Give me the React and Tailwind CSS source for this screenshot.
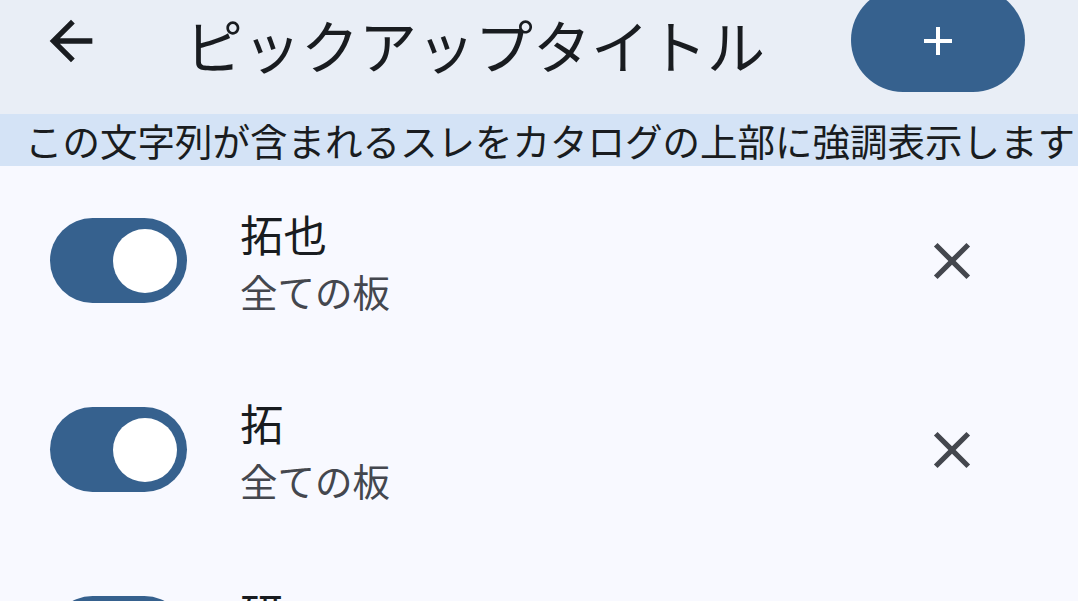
import React, { useState } from 'react';

const FONT = { fontFamily: '"Noto Sans CJK JP", "Noto Sans", sans-serif' };

const initialItems = [
  { id: 1, title: '拓也', board: '全ての板', enabled: true },
  { id: 2, title: '拓', board: '全ての板', enabled: true },
  { id: 3, title: '研', board: '全ての板', enabled: true },
];

const Toggle = ({ on, onChange }) => (
  <button
    onClick={onChange}
    className={`flex items-center w-[137px] h-[85px] rounded-full px-[10px] shrink-0 ${
      on ? 'bg-[#36618e] justify-end' : 'bg-[#dfe2eb] justify-start border-4 border-[#73777f]'
    }`}
  >
    <span className={`block rounded-full ${on ? 'w-[64px] h-[64px] bg-white' : 'w-[40px] h-[40px] bg-[#73777f]'}`} />
  </button>
);

const PickupRow = ({ item, onToggle, onRemove }) => (
  <div className="flex items-center h-[189px] pl-[50px] pr-[95px]">
    <Toggle on={item.enabled} onChange={onToggle} />
    <div className="flex flex-col ml-[53px] flex-1">
      <span className="text-[43.5px] leading-[60px] text-[#191c20]">{item.title}</span>
      <span className="text-[37.5px] leading-[54px] text-[#44474e]">{item.board}</span>
    </div>
    <button onClick={onRemove} className="w-[62px] h-[62px] flex items-center justify-center">
      <svg viewBox="0 0 24 24" width="62" height="62" fill="#44474e">
        <path d="M19 6.41L17.59 5 12 10.59 6.41 5 5 6.41 10.59 12 5 17.59 6.41 19 12 13.41 17.59 19 19 17.59 13.41 12z" />
      </svg>
    </button>
  </div>
);

export default function App() {
  const [items, setItems] = useState(initialItems);

  const toggle = (id) =>
    setItems(items.map((it) => (it.id === id ? { ...it, enabled: !it.enabled } : it)));
  const remove = (id) => setItems(items.filter((it) => it.id !== id));

  return (
    <div className="w-[1078px] h-[601px] overflow-hidden bg-[#f8f9ff]" style={FONT}>
      {/* app bar */}
      <header className="flex items-start h-[114px] bg-[#e9eef6] overflow-hidden">
        <button className="w-[64px] h-[64px] ml-[39px] mt-[9px] flex items-center justify-center">
          <svg viewBox="0 0 24 24" width="64" height="64" fill="#191c20">
            <path d="M20 11H7.83l5.59-5.59L12 4l-8 8 8 8 1.41-1.41L7.83 13H20v-2z" />
          </svg>
        </button>
        <h1 className="ml-[82px] mt-[8px] text-[58px] leading-[72px] text-[#191c20] whitespace-nowrap">
          ピックアップタイトル
        </h1>
        <button className="ml-auto mr-[53px] mt-[-12px] w-[174px] h-[104px] rounded-full bg-[#36618e] flex items-center justify-center pt-[2px]">
          <svg viewBox="0 0 30 30" width="30" height="30">
            <path d="M15 1v28M1 15h28" stroke="white" strokeWidth="4" />
          </svg>
        </button>
      </header>

      {/* hint banner */}
      <div className="h-[52px] bg-[#d4e3f6] flex items-center pl-[25px] overflow-hidden">
        <p className="text-[37.5px] leading-[52px] text-[#191c20] whitespace-nowrap">
          この文字列が含まれるスレをカタログの上部に強調表示します
        </p>
      </div>

      <div className="flex flex-col">
        {items.map((item) => (
          <PickupRow
            key={item.id}
            item={item}
            onToggle={() => toggle(item.id)}
            onRemove={() => remove(item.id)}
          />
        ))}
      </div>
    </div>
  );
}
